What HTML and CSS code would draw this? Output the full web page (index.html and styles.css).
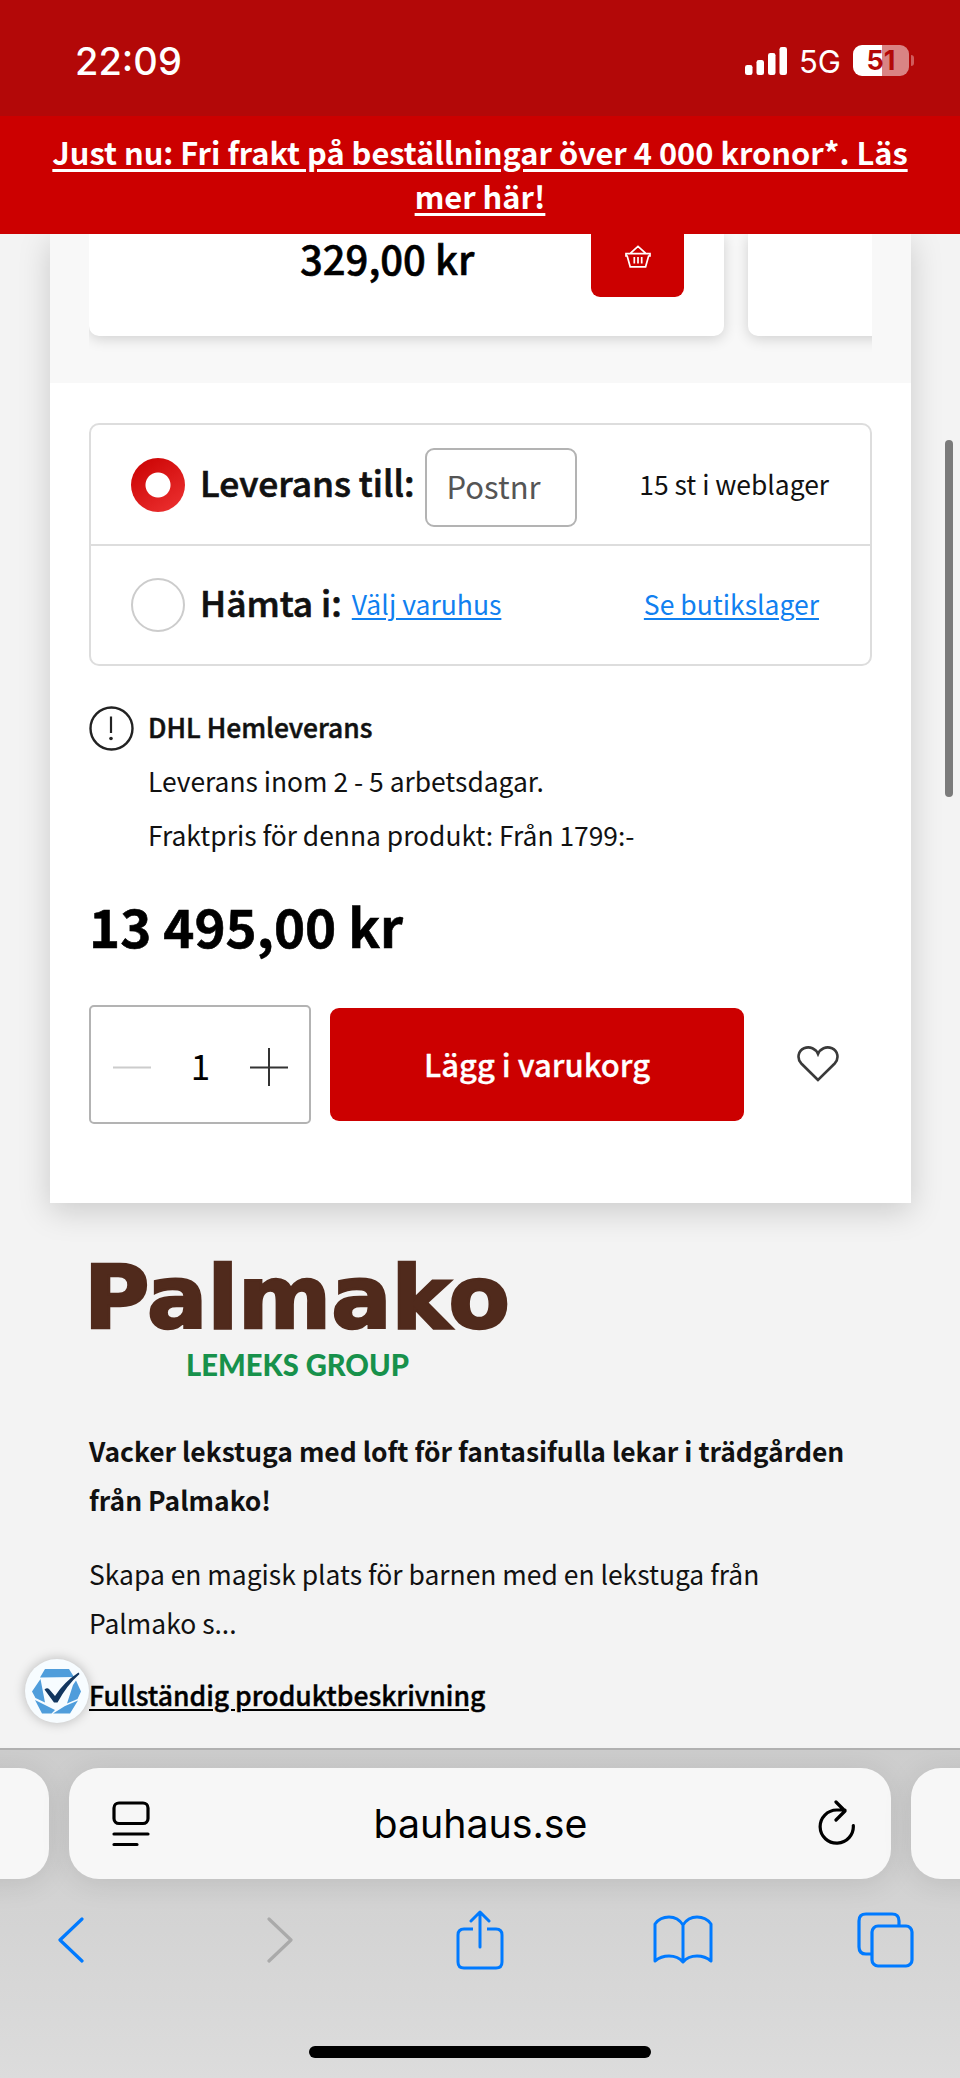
FILE: index.html
```html
<!DOCTYPE html>
<html lang="sv">
<head>
<meta charset="utf-8">
<title>bauhaus.se</title>
<link rel="stylesheet" href="styles.css">
</head>
<body>
<div class="screen">
  <header class="status">
    <span class="clock">22:09</span>
    <div class="status-icons">
      <svg class="signal" width="42" height="28" viewBox="0 0 42 28" fill="#fff"><rect x="0" y="18" width="7.500" height="10" rx="2.300"/><rect x="11.500" y="13" width="7.500" height="15" rx="2.300"/><rect x="23" y="6" width="7.500" height="22" rx="2.300"/><rect x="34.500" y="0" width="7.500" height="28" rx="2.300"/></svg>
      <span class="net">5G</span>
      <div class="battery"><span>51</span></div>
      <i class="battery-tip"></i>
    </div>
  </header>
  <a class="promo">Just nu: Fri frakt på beställningar över 4 000 kronor*. Läs mer här!</a>

  <main class="page">
    <section class="panel">
      <div class="related">
        <div class="slider">
          <div class="slide">
            <span class="slide-price">329,00 kr</span>
            <div class="basket">
              <svg width="26" height="24" viewBox="0 0 26 24" fill="none" stroke="#fff" stroke-width="1.7"><path d="M1 8.6H25V11H23.6L20.6 21.8H5.2L2.2 11H1ZM5.5 8.2L13 1.4L20.5 8.2M9.3 12V18.5M13 12V18.5M16.7 12V18.5"/></svg>
            </div>
          </div>
          <div class="slide"></div>
        </div>
      </div>

      <div class="buy">
        <div class="options">
          <div class="option">
            <i class="radio checked"></i>
            <strong>Leverans till:</strong>
            <div class="postnr">Postnr</div>
            <span class="stock">15 st i weblager</span>
          </div>
          <div class="option">
            <i class="radio"></i>
            <strong>Hämta i:</strong>
            <a class="choose">Välj varuhus</a>
            <a class="store">Se butikslager</a>
          </div>
        </div>

        <div class="shipping">
          <svg width="45" height="45" viewBox="0 0 45 45" fill="none" stroke="#222"><circle cx="22.5" cy="22.5" r="21" stroke-width="2.4"/><path d="M22 10.500V27" stroke-width="2.2"/><circle cx="22" cy="32.500" r="1.8" fill="#222" stroke="none"/></svg>
          <div class="shipping-text">
            <b>DHL Hemleverans</b>
            <span>Leverans inom 2 - 5 arbetsdagar.</span>
            <span>Fraktpris för denna produkt: Från 1799:-</span>
          </div>
        </div>

        <div class="price">13 495,00 kr</div>

        <div class="cart">
          <div class="qty">
            <svg width="38" height="38" viewBox="0 0 38 38"><path d="M0 19.500H38" stroke="#ccc" stroke-width="2"/></svg>
            <span>1</span>
            <svg width="38" height="38" viewBox="0 0 38 38"><path d="M0 19.500H38M19 0V38" stroke="#333" stroke-width="2"/></svg>
          </div>
          <div class="add">Lägg i varukorg</div>
          <svg class="heart" width="42" height="36" viewBox="0 0 42 36" fill="none" stroke="#3a3a3a" stroke-width="2.600"><path d="M21 34L4.300 17.500C-.5 12.500 1.300 4.500 7 2.200C13-.2 18.800 2.800 21 8C23.200 2.800 29-.2 35 2.200C40.700 4.500 42.500 12.500 37.700 17.500Z"/></svg>
        </div>
      </div>
    </section>

    <section class="about">
      <svg class="brand" width="430" height="130" viewBox="0 0 430 130">
        <text class="brand-name" x="-5" y="69" textLength="426" lengthAdjust="spacingAndGlyphs">Palmako</text>
        <text class="brand-group" x="97" y="116.500" textLength="223" lengthAdjust="spacingAndGlyphs">LEMEKS GROUP</text>
      </svg>
      <h2>Vacker lekstuga med loft för fantasifulla lekar i trädgården från Palmako!</h2>
      <p>Skapa en magisk plats för barnen med en lekstuga från Palmako s...</p>
      <a class="full">Fullständig produktbeskrivning</a>
    </section>
    <div class="badge">
      <svg width="50" height="50" viewBox="0 0 50 50"><path d="M13 3H37L42 11L8 11.500ZM8.500 13L0 25.500L3.500 32L13 36.500ZM44 14.500L49 25.500L45.500 33L35 37.500L41 19ZM3 34L23 44L19.500 47.500H10ZM46 34.500L38 47.500H21L33 40Z" fill="#4f9ddb"/><path d="M12.500 23.500Q15 21.500 17 23L23 30Q32 16 46.500 6.500L47.500 8Q35 19 25.500 36.500H22Z" fill="#12365f"/></svg>
    </div>
    <i class="scrollbar"></i>
  </main>

  <footer class="browser">
    <div class="tabs">
      <div class="tab side"></div>
      <div class="tab address">
        <svg width="38" height="46" viewBox="0 0 38 46" fill="none" stroke="#000" stroke-width="3.200" stroke-linecap="round"><rect x="2" y="2" width="34" height="20.500" rx="5"/><path d="M2 33H36M2 43.500H25"/></svg>
        <span class="url">bauhaus.se</span>
        <svg width="38" height="48" viewBox="0 0 38 48" fill="none" stroke="#000" stroke-width="3.200" stroke-linecap="round" stroke-linejoin="round"><path d="M35.300 25.500A16.600 16.600 0 1 1 18.700 10H27M18 2L27 11L18 20"/></svg>
      </div>
      <div class="tab side"></div>
    </div>
    <nav class="tools">
      <svg class="back" width="28" height="46" viewBox="0 0 28 46" fill="none" stroke="#007aff" stroke-width="3.200" stroke-linecap="round" stroke-linejoin="round"><path d="M25 2L3 23L25 44"/></svg>
      <svg class="forward" width="28" height="46" viewBox="0 0 28 46" fill="none" stroke="#aaa" stroke-width="3.200" stroke-linecap="round" stroke-linejoin="round"><path d="M3 2L25 23L3 44"/></svg>
      <svg class="share" width="48" height="60" viewBox="0 0 48 60" fill="none" stroke="#007aff" stroke-width="3" stroke-linecap="butt" stroke-linejoin="round"><path d="M17 19H8Q2 19 2 25V52Q2 58 8 58H40Q46 58 46 52V25Q46 19 40 19H31"/><path stroke-linecap="round" d="M24 37V3M15 11L24 2L33 11"/></svg>
      <svg class="book" width="60" height="50" viewBox="0 0 60 50" fill="none" stroke="#007aff" stroke-width="3" stroke-linecap="round" stroke-linejoin="round"><path d="M30 10Q25 2 16 2Q7 2 2 9V46Q8 41 16 41Q25 41 30 47Q35 41 44 41Q52 41 58 46V9Q53 2 44 2Q35 2 30 10V46"/></svg>
      <svg class="pages" width="57" height="56" viewBox="0 0 57 56" fill="none" stroke="#007aff" stroke-width="3.200"><path d="M15 42H9Q2 42 2 35V9Q2 2 9 2H35Q42 2 42 9V14"/><rect x="15" y="14" width="40" height="40" rx="6"/></svg>
    </nav>
    <i class="home"></i>
  </footer>
</div>
</body>
</html>
```
FILE: styles.css
```css
* { box-sizing: border-box; }
body { margin: 0; background: #f3f3f3; color: #111; font-family: "Noto Sans CJK SC", "Open Sans", sans-serif; }
svg { display: block; flex: none; }
.screen { width: 960px; height: 2078px; display: flex; flex-direction: column; overflow: hidden; }

.status { height: 116px; flex: none; background: #b30808; color: #fff; display: flex; justify-content: space-between; align-items: flex-start; padding: 38px 46px 0 75px; font-family: Inter, sans-serif; }
.clock { font-size: 38px; line-height: 46px; font-weight: 500; }
.status-icons { display: flex; align-items: center; height: 45px; }
.net { width: 40px; font-size: 31px; line-height: 44px; margin: 2px 0 0 12px; }
.battery { width: 56px; height: 31px; margin-left: 14px; border-radius: 9px; background: linear-gradient(90deg, #fff 52%, #d98484 52%); color: #b30808; font-size: 27px; line-height: 31px; font-weight: 700; text-align: center; }
.battery-tip { width: 3px; height: 11px; margin-left: 2px; border-radius: 0 3px 3px 0; background: #d05c5c; }

.promo { height: 118px; flex: none; background: #c00; color: #fff; padding: 14px 44px 0; text-align: center; font-size: 30.8px; line-height: 44px; font-weight: 700; text-decoration: underline; text-underline-offset: 4px; text-decoration-thickness: 3px; }

.page { position: relative; height: 1514px; flex: none; overflow: hidden; }
.panel { width: 861px; height: 969px; margin-left: 50px; background: #fff; box-shadow: 0 8px 30px rgba(0,0,0,.17); }
.related { height: 149px; background: #f8f8f8; padding: 0 39px; }
.slider { height: 120px; display: flex; gap: 24px; overflow: hidden; }
.slide { width: 635px; height: 102px; flex: none; background: #fff; border-radius: 0 0 10px 10px; box-shadow: 0 3px 14px rgba(0,0,0,.16); display: flex; align-items: flex-start; padding-left: 211px; }
.slide-price { width: 291px; font-size: 40px; line-height: 49px; font-weight: 500; color: #000; -webkit-text-stroke: .6px; }
.basket { width: 93px; height: 63px; background: #c00; border-radius: 0 0 9px 9px; display: flex; justify-content: center; padding-top: 11px; }

.buy { padding: 40px 39px 0 39px; }
.options { height: 243px; border: 2px solid #ddd; border-radius: 10px; }
.option { height: 119px; display: flex; align-items: center; padding: 0 41px 0 40px; }
.option + .option { height: 120px; border-top: 2px solid #ddd; }
.radio { width: 54px; height: 54px; flex: none; border: 2px solid #ccc; border-radius: 50%; margin-right: 15px; }
.radio.checked { border: 0; background: radial-gradient(circle, #fff 12px, transparent 13px), linear-gradient(145deg, #c90000, #e33); }
.option strong { margin-top: -7px; font-size: 35.3px; font-weight: 500; white-space: nowrap; -webkit-text-stroke: .7px; }
.postnr { width: 152px; height: 79px; margin: 5px 0 0 10px; border: 2px solid #b3b3b3; border-radius: 9px; padding: 0 20px; color: #555; font-size: 31px; line-height: 71px; }
.stock { margin: -3px 0 0 auto; font-size: 26.4px; white-space: nowrap; }
.option a { margin-top: -3px; color: #1080f0; font-size: 26.5px; text-decoration: underline; text-underline-offset: 3px; text-decoration-thickness: 2px; }
.option .choose { margin-left: 10px; }
.option .store { margin-left: auto; margin-right: 10px; }

.shipping { display: flex; gap: 14px; margin-top: 40px; }
.shipping-text { display: flex; flex-direction: column; font-size: 26.4px; line-height: 54px; margin-top: -6px; }
.shipping-text b { font-weight: 500; -webkit-text-stroke: .5px; }
.price { margin-top: 21px; font-size: 52.8px; line-height: 84px; font-weight: 700; color: #000; -webkit-text-stroke: .6px; }

.cart { display: flex; align-items: center; margin-top: 38px; }
.qty { width: 222px; height: 119px; border: 2px solid #b3b3b3; border-radius: 5px; display: flex; align-items: center; justify-content: space-between; padding: 4px 21px 0 22px; font-size: 35px; line-height: 60px; color: #000; }
.qty span { margin-top: -4px; }
.add { width: 414px; height: 113px; margin-left: 19px; border-radius: 9px; background: #c00; color: #fff; font-size: 31px; line-height: 112px; font-weight: 500; text-align: center; -webkit-text-stroke: .3px; }
.heart { margin: -2px 0 0 53px; }

.about { padding: 56px 89px 0; }
.brand { overflow: visible; }
.brand-name { font: 700 88px "DejaVu Sans", sans-serif; fill: #502a1c; stroke: #502a1c; stroke-width: 2.5px; }
.brand-group { font: 900 30px Lato, sans-serif; fill: #17914b; }
h2 { margin: 37px 0 0; width: 780px; font-size: 26.43px; line-height: 49px; font-weight: 700; }
.about p { margin: 25px 0 0; width: 700px; font-size: 26.43px; line-height: 49px; }
.full { display: inline-block; margin-top: 23px; font-size: 26.5px; line-height: 49px; font-weight: 500; color: #000; text-decoration: underline; text-underline-offset: 3px; text-decoration-thickness: 2px; -webkit-text-stroke: .4px; }
.badge { position: absolute; left: 25px; top: 1425px; width: 64px; height: 64px; border-radius: 50%; background: #f7fcff; box-shadow: 0 0 12px rgba(0,0,0,.25); display: flex; align-items: center; justify-content: center; }
.scrollbar { position: absolute; left: 945px; top: 206px; width: 8px; height: 357px; border-radius: 4px; background: #7b7b7b; }

.browser { flex: 1; background: linear-gradient(#cdcdcd, #d4d4d4 55%, #dcdcdc); border-top: 2px solid #b1b1b1; }
.tabs { display: flex; gap: 20px; margin: 18px -772px 0; height: 111px; }
.tab { width: 822px; flex: none; border-radius: 30px; background: #f7f7f7; box-shadow: 0 4px 30px rgba(0,0,0,.1); }
.side:first-child { width: 821px; }
.address { display: flex; align-items: center; justify-content: space-between; padding: 0 35px 0 43px; font-family: Inter, sans-serif; font-size: 39.3px; color: #000; }
.url { margin-right: 7px; }
.tools { display: flex; align-items: center; height: 60px; margin: 31px 0 0 57px; }
.forward { margin-left: 181px; }
.share { margin-left: 162px; }
.book { margin-left: 149px; }
.pages { margin-left: 144px; }
.home { display: block; width: 342px; height: 12px; margin: 76px auto 0; border-radius: 6px; background: #000; }
```
